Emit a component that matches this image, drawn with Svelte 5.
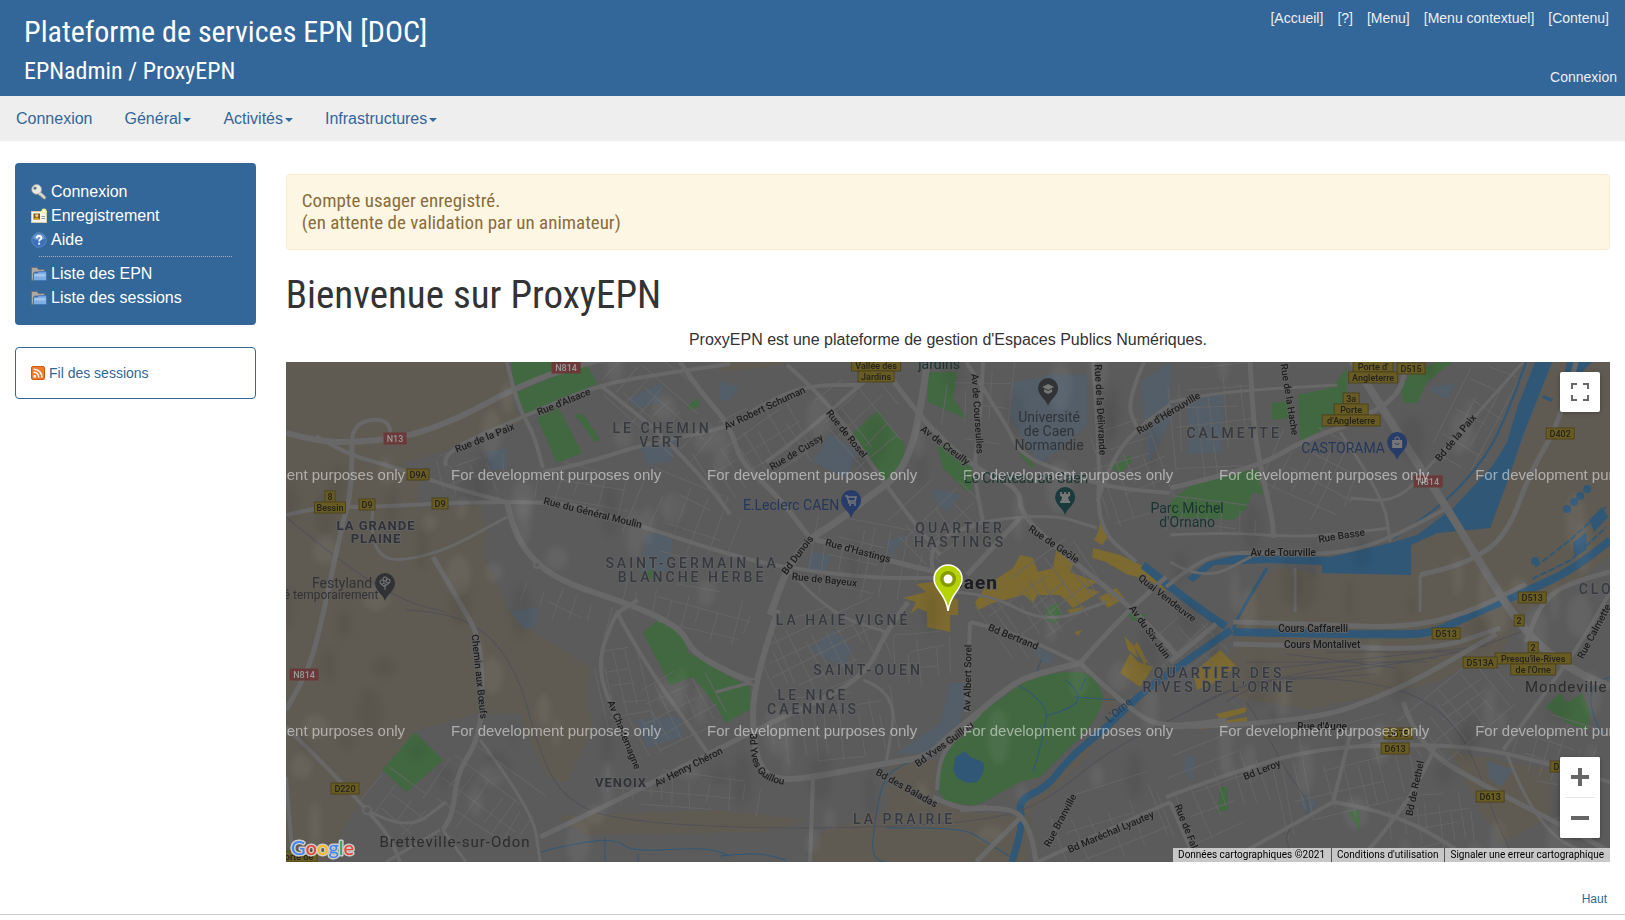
<script lang="ts">
	interface Road { w: number; d: string }
	interface Label { t: string; x: number; y: number; r?: number; k?: string }
	interface Badge { t: string; x: number; y: number; red?: boolean }
	interface District { x: number; y: number; w: number; h: number; a: number; s: number }

	const shortcuts = ['[Accueil]', '[?]', '[Menu]', '[Menu contextuel]', '[Contenu]'];

	const nav = [
		{ label: 'Connexion', caret: false },
		{ label: 'Général', caret: true },
		{ label: 'Activités', caret: true },
		{ label: 'Infrastructures', caret: true },
	];

	const sideTop = [
		{ label: 'Connexion', icon: 'key' },
		{ label: 'Enregistrement', icon: 'card' },
		{ label: 'Aide', icon: 'help' },
	];
	const sideBottom = ['Liste des EPN', 'Liste des sessions'];

	const farmland = [
		'M0 0H224L227 43L237 60L154 90L117 100L132 120V146L194 143L201 166L197 193L211 220L221 248L241 265L304 305L301 341L307 365L281 421L261 415L241 371L234 351H194L131 368L94 411L61 461L44 500H0Z',
		'M270 454L434 448L520 458L480 470L300 472Z',
		'M524 500L534 471L601 448L607 401L651 398L647 435L674 448L727 455L760 430L820 360L818 320L832 335L800 395L765 430L745 450L740 500Z',
		'M1267 0H1324V193L1284 226L1234 253L1215 290L1150 320L1021 348L951 335L920 330L951 281L950 250L990 205L1036 212H1125V183L1151 171L1204 166Z',
		'M1164 388L1194 395L1264 408V455L1217 481L1194 448Z',
		'M434 0H505L480 5L434 10Z',
	];

	const patches = [
		'M544 71L571 90L561 116L527 100Z', 'M724 56L727 20L767 13L801 13V63L754 103Z',
		'M647 126L674 133L661 150L651 142Z', 'M901 33H937L936 90L901 93Z',
		'M354 86L391 76L384 100L362 103Z', 'M201 90L221 86V106L204 108Z',
		'M361 173H387L384 210H354Z', 'M351 358L394 355L397 375L361 385Z',
		'M547 268L567 288L557 305L524 288Z', 'M664 321L681 321L674 361L651 391H611L654 361Z',
		'M1201 398L1227 408L1214 425L1203 416Z', 'M340 38L378 20L372 40L352 46Z',
		'M524 190L545 193L538 212L522 205Z', 'M434 20L452 24L445 38H434Z', 'M225 250L252 245L250 262L238 268Z',
		'M900 392L908 396L907 420L898 408Z', 'M1141 25L1170 22L1160 38Z', 'M855 20L884 0V60L862 100Z',
		'M1016 430L1030 440L1024 452L1014 445Z', 'M600 180L622 172L604 195Z', 'M752 284L768 296L762 302L750 294Z',
	];

	const greens = [
		'M226 0H276L267 10L227 26Z', 'M229 31L264 16L294 0H300L311 21L241 55Z', 'M251 56L272 45L296 91L271 101Z',
		'M289 53L297 51L314 78L309 80Z', 'M592 48L619 83L616 110L597 123L567 71Z',
		'M642 10H671L667 36L681 56L664 50L642 40Z', 'M651 86L661 83L686 106V126L681 130L657 106Z',
		'M824 106L844 93L846 100L834 111Z', 'M986 41L1004 38V56L986 58Z', 'M1012 33L1047 25L1061 5V53L1014 80Z',
		'M1114 26L1124 13L1151 0H1166L1141 20L1131 41L1117 41Z',
		'M884 140L901 126L927 113L971 108L977 133L966 130L961 146L947 158L884 155Z',
		'M129 370L157 398L121 430L96 408Z',
		'M357 271L374 256L394 265L402 291L417 298L444 315L464 325V348L439 361L431 345L407 315L384 323Z',
		'M1259 345L1274 331L1281 341L1296 331L1304 351L1301 368L1281 361Z', 'M1062 450L1074 448V471Z',
		'M934 425H941L942 448L931 451Z', 'M733 92L738 90L749 104L746 106Z', 'M760 247L772 240L776 252L768 262L758 256Z',
		'M354 213L366 207L376 214L364 217Z', 'M401 44L412 36L414 44L404 48Z', 'M840 250L860 252L856 262L846 258Z',
	];

	const shops = [
		'M689 240L701 223L727 206L734 193L747 196L752 210L767 206L771 183L778 192L791 193L784 210L811 220L800 226L814 230L787 246L774 233H751L747 241L738 233L707 241L692 248Z',
		'M647 206L664 214V233L672 238L672 253H664V270L641 265V250L632 246L624 252L630 240L617 236L640 230L630 222L647 220Z',
		'M814 160L818 168L824 172L816 183L808 178L812 170Z', 'M807 186L834 193L861 206L881 230L862 218L840 212L820 200L806 196Z',
		'M844 291L852 300L867 305L854 325L834 311Z', 'M934 288L951 305L930 320L911 328L907 311Z',
		'M914 363L961 355V360L915 367Z', 'M930 352L960 345V350L934 358Z', 'M838 274L848 284L852 296L842 288Z',
		'M788 270L796 268L792 274Z', 'M781 248L800 244L786 254Z', 'M812 236L830 226L838 236L822 246Z', 'M851 280L862 300L858 302L848 284Z',
	];

	const roads: Road[] = [
		{ w: 6, d: 'M0 71L34 80H74L121 75L174 56L221 30L267 11L320 -4' },
		{ w: 5, d: 'M66 81V126L57 160L47 206L37 253L24 305L0 348' },
		{ w: 4, d: 'M66 81Q66 60 86 58T104 74' },
		{ w: 4, d: 'M30 74L60 92L101 103L167 126L221 140' },
		{ w: 4, d: 'M221 140H287L327 156L361 166L444 193L501 206L584 216H647' },
		{ w: 4, d: 'M0 153L31 145H87L161 141L221 140' },
		{ w: 4, d: 'M0 365L37 401L81 448L104 475L114 500M0 415L7 500' },
		{ w: 4, d: 'M160 104L154 91L234 56L311 23L381 11L444 2' },
		{ w: 4, d: 'M221 0L231 43L247 70L257 106' },
		{ w: 4, d: 'M314 23L361 60L384 82L420 120L444 152' },
		{ w: 5, d: 'M394 0L414 30L444 63L454 100L490 132L524 176' },
		{ w: 4, d: 'M257 110L294 103L361 81L444 66L474 43L521 23L574 23' },
		{ w: 6, d: 'M221 140L227 170L251 203L284 223L341 241L394 265L407 291L444 311L467 320' },
		{ w: 6, d: 'M492 248L467 320V381L477 411L497 418L527 415L601 401L641 395L661 375L687 355L727 321L754 311L794 301' },
		{ w: 5, d: 'M254 475L307 450L377 415L444 381L491 358L577 318L600 270L622 240' },
		{ w: 5, d: 'M147 195L181 253L191 271L197 315L194 375L171 411L167 451L157 468' },
		{ w: 3, d: 'M87 146L81 200L147 195L221 155M194 378L247 448L254 500' },
		{ w: 4, d: 'M331 251L316 281L314 315L327 348L351 408M331 251L361 305L411 375L424 395M331 251L352 238' },
		{ w: 7, d: 'M641 0L634 56L617 110L581 136L551 160L524 176L501 206L484 253' },
		{ w: 4, d: 'M501 3L544 40L601 126L654 193M601 0L574 23L520 70L480 100' },
		{ w: 5, d: 'M601 10L631 53L687 106L734 126V153L787 200L834 236L870 270L892 296' },
		{ w: 4, d: 'M697 0L694 60L687 110L697 160M680 0L721 63L734 93L784 113L827 126L884 131' },
		{ w: 4, d: 'M807 0L814 93L811 166L850 200M884 43L851 66L827 96L811 140M858 0L840 40L851 66' },
		{ w: 5, d: 'M734 156L681 213M524 176L607 200L660 212' },
		{ w: 5, d: 'M884 126L971 106L1014 80L1071 60L1114 33L1120 0' },
		{ w: 8, d: 'M1064 -5L1117 80L1161 146L1197 206L1227 253L1254 285L1291 311L1324 325' },
		{ w: 5, d: 'M964 0L967 60L974 103L987 160V176' },
		{ w: 3, d: 'M884 40L927 30L1051 23M1054 70L1097 133L1104 180M1237 0L1184 60L1144 103L1111 140L1064 136' },
		{ w: 4, d: 'M880 225L917 193L967 190L1044 193L1097 180L1161 146' },
		{ w: 3, d: 'M884 173L940 170L1017 176L1104 166' },
		{ w: 5, d: 'M1290 0L1274 60L1244 110L1221 173L1184 200L1134 213M1324 210L1284 220L1255 240L1240 280' },
		{ w: 5, d: 'M947 260L1027 262L1117 266L1180 252L1240 222M947 282L1036 284L1150 288L1214 266' },
		{ w: 5, d: 'M884 300L930 262M794 301L830 260L880 215M794 301L850 355L884 365L940 358' },
		{ w: 5, d: 'M674 448L727 442L745 470L750 500M690 500L735 455M647 435L674 448L700 445' },
		{ w: 5, d: 'M884 365L1014 362L1110 330L1210 272M1117 340L1132 385L1200 425L1270 460L1324 490' },
		{ w: 4, d: 'M880 435L960 405L1040 385L1150 382L1220 390L1324 420M1217 388L1290 290L1324 230' },
		{ w: 4, d: 'M1150 382L1132 425L1090 480L1070 500M1047 440L1110 450L1190 500M1047 440L1066 365M1047 440L940 500' },
		{ w: 4, d: 'M884 440L910 500M751 500L884 440M647 208L640 180L697 160M527 415L524 500' },
		{ w: 4, d: 'M651 428L652 400L667 378L694 351M684 260L680 350M684 260L727 270L790 300' },
		{ w: 3, d: 'M154 468L100 500M157 468L180 500M81 448L120 470L160 440M467 320L430 330M577 318L612 330L600 401' },
		{ w: 3, d: 'M660 230H700L760 262L820 240M697 160L760 150L811 166M501 206L540 250L600 270' },
		{ w: 3, d: 'M1134 213V250M1009 206V250M884 200L917 220L970 192M1220 390L1250 470L1324 500' },
	];

	const rivers: Road[] = [
		{ w: 8, d: 'M1324 178L1291 206L1234 232L1184 253L1150 270L1117 273L947 270' },
		{ w: 7, d: 'M945 268L884 310L851 335L821 365L784 395L761 425L732 438L737 461L726 500' },
		{ w: 8, d: 'M857 203L884 225L927 257L940 264' },
		{ w: 3, d: 'M981 206L954 250L947 268' },
		{ w: 1, d: 'M730 322L762 340L758 372L747 410M780 318L794 330L790 344L760 354M794 328L800 316M788 335L830 338' },
		{ w: 1, d: 'M600 500H584L590 450L598 415L620 400L650 393M600 466L674 464L700 480L726 496M255 490L275 484L330 476L345 490L420 485L444 494' },
		{ w: 1, d: 'M319 476V500M352 492V500M434 494L470 490L500 498M755 298L750 312M1324 315L1304 322L1305 350L1316 372' },
		{ w: 2, d: 'M1240 0L1222 50L1200 95L1160 140L1108 176' },
	];

	const rails = [
		'M0 155L60 205L120 240L160 250M120 248L160 250L205 272L235 320L250 380L275 435L330 460L520 468L700 460L760 440L820 390L900 350L960 320L1060 310L1180 290L1240 268',
		'M900 350L960 312L1100 320L1160 350L1190 400L1210 460L1230 500',
		'M940 340L980 312L1150 296M960 300L1140 300M1000 292L1110 306M990 306L1200 284M1000 318L1090 312M1040 290L1180 290',
		'M960 340L980 370L1000 410L1030 450L998 468L1004 490',
	];

	// rounds the corners of a polyline: each inner point becomes a control point
	function smooth(d: string): string {
		if (/[QTC]/.test(d)) return d;
		let out = '';
		for (const part of d.split('M').slice(1)) {
			const pts: number[][] = [];
			for (const cmd of ('L' + part).match(/[LHV][^LHV]+/g) ?? []) {
				const n = cmd.slice(1).trim().split(/\s+/).map(Number);
				const prev = pts[pts.length - 1];
				if (cmd[0] === 'H') pts.push([n[0], prev[1]]);
				else if (cmd[0] === 'V') pts.push([prev[0], n[0]]);
				else pts.push(n);
			}
			out += `M${pts[0]}`;
			for (let i = 1; i < pts.length - 1; i++) {
				const [ax, ay] = pts[i];
				const [bx, by] = pts[i + 1];
				out += `Q${ax},${ay} ${(ax + bx) / 2},${(ay + by) / 2}`;
			}
			out += `L${pts[pts.length - 1]}`;
		}
		return out;
	}

	// side streets are laid out as jittered grids, one per district
	const districts: District[] = [
		{ x: 370, y: 40, w: 130, h: 70, a: 42, s: 13 }, { x: 470, y: 90, w: 110, h: 90, a: -32, s: 13 },
		{ x: 400, y: 165, w: 110, h: 90, a: 20, s: 16 }, { x: 575, y: 60, w: 90, h: 80, a: 50, s: 17 },
		{ x: 190, y: 110, w: 70, h: 50, a: -15, s: 14 }, { x: 300, y: 130, w: 100, h: 50, a: 12, s: 18 },
		{ x: 280, y: 245, w: 90, h: 50, a: 20, s: 14 }, { x: 400, y: 250, w: 130, h: 50, a: 14, s: 15 },
		{ x: 540, y: 285, w: 130, h: 80, a: -25, s: 11 }, { x: 550, y: 365, w: 130, h: 70, a: -8, s: 13 },
		{ x: 390, y: 350, w: 90, h: 70, a: -28, s: 11 }, { x: 340, y: 330, w: 50, h: 90, a: -14, s: 12 },
		{ x: 200, y: 440, w: 110, h: 80, a: 36, s: 14 }, { x: 110, y: 450, w: 70, h: 60, a: 40, s: 15 },
		{ x: 400, y: 430, w: 160, h: 40, a: 5, s: 14 }, { x: 580, y: 200, w: 110, h: 80, a: 10, s: 14 },
		{ x: 660, y: 160, w: 90, h: 80, a: -42, s: 15 }, { x: 760, y: 240, w: 120, h: 80, a: -36, s: 11 },
		{ x: 700, y: 40, w: 80, h: 90, a: 4, s: 19 }, { x: 850, y: 110, w: 80, h: 100, a: -20, s: 13 },
		{ x: 930, y: 60, w: 90, h: 110, a: -5, s: 14 }, { x: 1030, y: 115, w: 100, h: 90, a: 26, s: 14 },
		{ x: 1190, y: 60, w: 60, h: 110, a: 28, s: 14 }, { x: 930, y: 160, w: 100, h: 40, a: 8, s: 13 },
		{ x: 1060, y: 415, w: 140, h: 100, a: -12, s: 13 }, { x: 1150, y: 460, w: 90, h: 60, a: -8, s: 11 },
		{ x: 930, y: 430, w: 110, h: 100, a: -22, s: 15 }, { x: 830, y: 460, w: 120, h: 80, a: -20, s: 17 },
		{ x: 1180, y: 350, w: 120, h: 70, a: -38, s: 12 }, { x: 1270, y: 390, w: 80, h: 70, a: 15, s: 13 },
		{ x: 900, y: 290, w: 70, h: 60, a: -40, s: 13 }, { x: 640, y: 300, w: 60, h: 60, a: -6, s: 15 },
	];

	let seed = 7;
	function rnd() {
		seed = (seed * 16807) % 2147483647;
		return seed / 2147483647;
	}

	function streets(d: District): string {
		let out = '';
		for (let x = -d.w / 2; x <= d.w / 2; x += d.s * (0.7 + rnd() * 0.8)) {
			const top = -d.h / 2 + rnd() * d.h * 0.4;
			const end = d.h / 2 - rnd() * d.h * 0.4;
			out += `M${x.toFixed()} ${top.toFixed()}L${(x + rnd() * 6 - 3).toFixed()} ${end.toFixed()}`;
		}
		for (let y = -d.h / 2; y <= d.h / 2; y += d.s * (1 + rnd())) {
			const left = -d.w / 2 + rnd() * d.w * 0.4;
			const end = d.w / 2 - rnd() * d.w * 0.4;
			out += `M${left.toFixed()} ${y.toFixed()}L${end.toFixed()} ${(y + rnd() * 8 - 4).toFixed()}`;
		}
		return out;
	}

	const grids = districts.map((d) => ({ ...d, path: streets(d) }));

	const hills = Array.from({ length: 150 }, () => ({
		x: rnd() * 1324, y: rnd() * 500, rx: 4 + rnd() * 9, ry: 8 + rnd() * 20, light: rnd() > 0.4,
	}));

	const labels: Label[] = [
		{ t: 'LE CHEMIN', x: 376, y: 71, k: 'area' }, { t: 'VERT', x: 376, y: 85, k: 'area' },
		{ t: 'LA GRANDE', x: 90, y: 168, k: 'town' }, { t: 'PLAINE', x: 90, y: 181, k: 'town' },
		{ t: 'QUARTIER', x: 674, y: 171, k: 'area' }, { t: 'HASTINGS', x: 674, y: 185, k: 'area' },
		{ t: 'SAINT-GERMAIN LA', x: 406, y: 206, k: 'area' }, { t: 'BLANCHE HERBE', x: 406, y: 220, k: 'area' },
		{ t: 'CALMETTE', x: 948, y: 76, k: 'area' }, { t: 'CLO', x: 1310, y: 232, k: 'area' },
		{ t: 'LA HAIE VIGNÉ', x: 557, y: 263, k: 'area' }, { t: 'SAINT-OUEN', x: 582, y: 313, k: 'area' },
		{ t: 'LE NICE', x: 527, y: 338, k: 'area' }, { t: 'CAENNAIS', x: 527, y: 352, k: 'area' },
		{ t: 'LA PRAIRIE', x: 618, y: 462, k: 'area' }, { t: 'VENOIX', x: 335, y: 425, k: 'town' },
		{ t: 'QUARTIER DES', x: 933, y: 316, k: 'area' }, { t: "RIVES DE L'ORNE", x: 933, y: 330, k: 'area' },
		{ t: 'Bretteville-sur-Odon', x: 169, y: 485, k: 'village' }, { t: 'Mondeville', x: 1280, y: 330, k: 'village' },
		{ t: 'Caen', x: 688, y: 227, k: 'city' },
		{ t: 'Festyland', x: 56, y: 226, k: 'poi' }, { t: 'é temporairement', x: 45, y: 237, k: 'small' },
		{ t: 'Université', x: 763, y: 60, k: 'poi' }, { t: 'de Caen', x: 763, y: 74, k: 'poi' }, { t: 'Normandie', x: 763, y: 88, k: 'poi' },
		{ t: 'E.Leclerc CAEN', x: 505, y: 148, k: 'poi shop' }, { t: 'CASTORAMA', x: 1057, y: 91, k: 'poi shop' },
		{ t: 'Le Château de Caen', x: 740, y: 121, k: 'poi park' }, { t: 'jardins', x: 653, y: 7, k: 'poi park' },
		{ t: 'Parc Michel', x: 901, y: 151, k: 'poi park' }, { t: "d'Ornano", x: 901, y: 165, k: 'poi park' },
		{ t: "L'Orne", x: 835, y: 351, r: -41, k: 'river' },
		{ t: "Rue d'Alsace", x: 279, y: 43, r: -22 }, { t: 'Rue de la Paix', x: 200, y: 79, r: -22 },
		{ t: 'Rue du Général Moulin', x: 306, y: 154, r: 14 }, { t: 'Av Robert Schuman', x: 480, y: 49, r: -25 },
		{ t: 'Rue de Cussy', x: 512, y: 93, r: -31 }, { t: 'Rue de Rosel', x: 558, y: 74, r: 51 },
		{ t: 'Av de Creully', x: 657, y: 86, r: 37 }, { t: 'Av de Courseulles', x: 688, y: 52, r: 86 },
		{ t: 'Rue de la Délivrande', x: 811, y: 48, r: 87 }, { t: "Rue d'Hérouville", x: 884, y: 54, r: -31 },
		{ t: 'Rue de Geôle', x: 766, y: 185, r: 34 }, { t: 'Bd Dunois', x: 514, y: 195, r: -53 },
		{ t: "Rue d'Hastings", x: 571, y: 192, r: 15 }, { t: 'Rue de Bayeux', x: 538, y: 221, r: 6 },
		{ t: 'Quai Vendeuvre', x: 879, y: 239, r: 38 }, { t: 'Rue de la Hache', x: 1000, y: 38, r: 81 },
		{ t: 'Bd de la Paix', x: 1172, y: 78, r: -50 }, { t: 'Rue Basse', x: 1056, y: 177, r: -9 },
		{ t: 'Av de Tourville', x: 997, y: 194 }, { t: 'Rue Calmette', x: 1311, y: 271, r: -62 },
		{ t: 'Chemin aux Bœufs', x: 190, y: 315, r: 84 }, { t: 'Av Charlemagne', x: 335, y: 374, r: 68 },
		{ t: 'Av Henry Chéron', x: 404, y: 408, r: -27 }, { t: 'Av Albert Sorel', x: 685, y: 316, r: -89 },
		{ t: 'Bd Bertrand', x: 726, y: 278, r: 22 }, { t: 'Bd Yves Guillou', x: 660, y: 385, r: -36 },
		{ t: 'Bd des Baladas', x: 619, y: 429, r: 29 }, { t: 'Rue Branville', x: 777, y: 460, r: -62 },
		{ t: 'Bd Maréchal Lyautey', x: 826, y: 473, r: -23 }, { t: 'Av du Six Juin', x: 861, y: 272, r: 54 },
		{ t: 'Cours Caffarelli', x: 1027, y: 270 }, { t: 'Cours Montalivet', x: 1036, y: 286 },
		{ t: "Rue d'Auge", x: 1036, y: 368 }, { t: 'Bd Leroy', x: 977, y: 411, r: -22 },
		{ t: 'Bd de Rethel', x: 1132, y: 427, r: -78 }, { t: 'Rue de Fala', x: 898, y: 468, r: 68 },
	];

	const badges: Badge[] = [
		{ t: 'N814', x: 280, y: 6, red: true }, { t: 'N13', x: 109, y: 77, red: true }, { t: 'N814', x: 18, y: 313, red: true },
		{ t: 'N814', x: 1142, y: 120, red: true }, { t: 'D9A', x: 132, y: 113 }, { t: '8', x: 44, y: 135 }, { t: 'Bessin', x: 44, y: 146 },
		{ t: 'D9', x: 81, y: 143 }, { t: 'D9', x: 154, y: 142 }, { t: 'Vallée des', x: 590, y: 4 }, { t: 'Jardins', x: 590, y: 15 },
		{ t: "Porte d'", x: 1087, y: 5 }, { t: 'Angleterre', x: 1087, y: 16 }, { t: 'D515', x: 1125, y: 7 }, { t: '3a', x: 1065, y: 37 },
		{ t: 'Porte', x: 1065, y: 48 }, { t: "d'Angleterre", x: 1065, y: 59 }, { t: 'D402', x: 1274, y: 72 }, { t: 'D513', x: 1246, y: 236 },
		{ t: 'D220', x: 59, y: 427 }, { t: 'orte de', x: 13, y: 495 }, { t: 'D513', x: 1160, y: 272 }, { t: '2', x: 1233, y: 259 },
		{ t: '2', x: 1247, y: 286 }, { t: "Presqu'île-Rives", x: 1247, y: 297 }, { t: "de l'Orne", x: 1247, y: 308 },
		{ t: 'D513A', x: 1194, y: 301 }, { t: 'D675', x: 1112, y: 372 }, { t: 'D613', x: 1109, y: 387 }, { t: 'D613', x: 1204, y: 435 },
		{ t: 'D613', x: 1278, y: 405 },
	];

	function badgeWidth(t: string): number {
		return t.length < 6 ? t.length * 6 + 4 : Math.round(t.length * 4.5 + 4);
	}

	const pins = [
		{ x: 99, y: 222, fill: '#303236', icon: 'tree' }, { x: 762, y: 27, fill: '#303236', icon: 'school' },
		{ x: 779, y: 136, fill: '#1a3a3c', icon: 'tower' }, { x: 565, y: 139, fill: '#273c69', icon: 'cart' },
		{ x: 1111, y: 81, fill: '#273c69', icon: 'bag' },
	];

	const watermarkX = [-91, 165, 421, 677, 933, 1189];
	const watermarkY = [118, 374];
</script>

<header class="banner" id="top">
	<div class="titles">
		<h2 class="site"><a href="#top">Plateforme de services EPN [DOC]</a></h2>
		<h3 class="app"><a href="#top">EPNadmin / ProxyEPN</a></h3>
	</div>
	<div class="tools">
		<div class="shortcuts">
			{#each shortcuts as s}<a href="#content">{s}</a>{/each}
		</div>
		<a class="login" href="#login">Connexion</a>
	</div>
</header>

<nav class="navbar">
	{#each nav as item}
		<a href="#menu">{item.label}{#if item.caret}<span class="caret"></span>{/if}</a>
	{/each}
</nav>

<div class="layout">
	<aside class="sidebar">
		<div class="panel">
			<ul>
				{#each sideTop as item}
					<li>
						<a href="#side">
							<svg class="icon" viewBox="0 0 16 16" aria-hidden="true">
								{#if item.icon === 'key'}
									<path d="M9 7.4L14.6 12.6V15H12.4L11.6 13.6L10.4 13.4L9.8 12L8.4 11.6L6.6 9.8Z" fill="#d8d8ce" stroke="#8f8f86" stroke-width=".7" />
									<circle cx="5.6" cy="5.4" r="4.9" fill="#e9e9e2" stroke="#a3a39a" stroke-width=".7" />
									<circle cx="4" cy="4.2" r="1.4" fill="#4c6f8f" stroke="#96968c" stroke-width=".5" />
								{:else if item.icon === 'card'}
									<rect x=".5" y="3.5" width="15" height="11" fill="#f7f5e8" stroke="#d2cda8" />
									<rect x="2.5" y="5.5" width="6.5" height="6" fill="#7a5a10" />
									<circle cx="5.7" cy="7.6" r="1.7" fill="#f1c27d" />
									<path d="M3 11.5Q3 9.4 5.7 9.4T8.5 11.5Z" fill="#e9a11b" />
									<path d="M10.5 8.5H14M10.5 10.5H14" stroke="#9a9a9a" />
									<circle cx="13" cy="3.2" r="2.6" fill="#f8ef8a" />
									<circle cx="13" cy="3.2" r="1.3" fill="#fffce0" />
								{:else}
									<circle cx="8" cy="8" r="7.3" fill="#3c70b8" stroke="#5c86bf" />
									<path d="M2 6.5A6.2 6.2 0 0 1 14 6.5Q8 9.5 2 6.5Z" fill="#6f9bd6" />
									<path d="M5.7 6.2Q5.8 4 8.1 4T10.4 6.1C10.4 7.7 8.1 7.6 8.1 9.5" fill="none" stroke="#fff" stroke-width="1.8" />
									<rect x="7.2" y="10.7" width="1.9" height="1.9" fill="#fff" />
								{/if}
							</svg>
							{item.label}
						</a>
					</li>
				{/each}
			</ul>
			<hr />
			<ul>
				{#each sideBottom as label}
					<li>
						<a href="#side">
							<svg class="icon" viewBox="0 0 16 16" aria-hidden="true">
								<path d="M.5 14.5V1.5H6L7.5 3.5H13.5V6H3.5L2 14.5Z" fill="#aaa9a5" stroke="#6d6d6a" stroke-width=".8" />
								<path d="M2.5 14.5V7H6.5L7.5 5.7H15.5V14.5Z" fill="#7fade2" stroke="#3f76b8" stroke-width=".9" />
								<path d="M3.5 8H14.5V10.5H3.5Z" fill="#a3c6ee" />
							</svg>
							{label}
						</a>
					</li>
				{/each}
			</ul>
		</div>

		<div class="feed">
			<a href="#feed">
				<svg class="rss" viewBox="0 0 14 14" aria-hidden="true">
					<rect x=".5" y=".5" width="13" height="13" rx="1.5" fill="#ee7a2b" stroke="#cf5a14" />
					<circle cx="3.8" cy="10.4" r="1.3" fill="#fff" />
					<path d="M2.6 6.3A5 5 0 0 1 7.8 11.6M2.6 3.2A8.2 8.2 0 0 1 11 11.6" fill="none" stroke="#fff" stroke-width="1.5" />
				</svg>
				Fil des sessions
			</a>
		</div>
	</aside>

	<main class="content" id="content">
		<div class="alert" role="status">
			Compte usager enregistré.<br />
			(en attente de validation par un animateur)
		</div>

		<h1>Bienvenue sur ProxyEPN</h1>
		<p class="intro">ProxyEPN est une plateforme de gestion d'Espaces Publics Numériques.</p>

		<div class="map">
			<svg class="tiles" viewBox="0 0 1324 500" preserveAspectRatio="xMidYMid slice" role="img" aria-label="Caen">
				<defs>
					<filter id="haze" x="-50%" y="-50%" width="200%" height="200%"><feGaussianBlur stdDeviation="3" /></filter>
				</defs>
				<rect width="1324" height="500" fill="#5b5b5b" />
				{#each farmland as d}<path {d} fill="#605b52" />{/each}
				{#each patches as d}<path {d} fill="#535e69" />{/each}
				{#each greens as d}<path {d} fill="#426841" />{/each}
				<path d="M651 428V408L667 378L694 351L737 321Q767 308 794 310Q812 314 817 335Q814 355 794 375L754 415L734 420L707 435Q694 444 681 443L661 440Z" fill="#426841" />
				{#each shops as d}<path {d} fill="#7c6a30" />{/each}

				<g class="streets">
					{#each grids as g}
						<path d={g.path} transform="translate({g.x} {g.y}) rotate({g.a})" />
					{/each}
				</g>

				<g class="water">
					<path class="fill" d="M1249 0L1231 46L1221 80L1207 103L1167 146L1131 173L1104 181L1044 195L951 193L921 200L901 216L907 220L928 203L984 201L1036 203V211L1125 213V183L1151 171L1204 166L1221 120L1237 73L1266 0ZM1281 0H1306L1294 12H1278Z" />
					<path class="fill" d="M667 408L669 395L679 389L684 395L697 400Q700 410 691 420L681 421L671 416Z" />
					{#each rivers as r}<path d={smooth(r.d)} stroke-width={r.w} />{/each}
					<path class="fill" d="M1257 33L1267 37L1265 40L1256 36ZM1287 181L1300 170V188L1288 195ZM1303 158L1316 145L1322 155L1308 170Z" />
					<path d="M1246 217L1285 198L1320 165M1249 205L1284 178L1320 145" stroke-width="2" stroke-dasharray="7 2" />
					{#each [[1281, 147], [1288, 140], [1294, 134], [1301, 127], [1249, 199]] as [cx, cy]}
						<circle class="fill" {cx} {cy} r="4" />
					{/each}
				</g>

				<g class="rails">{#each rails as d}<path d={smooth(d)} />{/each}</g>
				<g class="roads">
					{#each roads as r}<path d={smooth(r.d)} stroke-width={r.w} />{/each}
					<circle cx="467" cy="320" r="3" /><circle cx="251" cy="203" r="3" /><circle cx="81" cy="448" r="4" />
				</g>

				<g filter="url(#haze)">
					{#each hills as h}
						<ellipse cx={h.x} cy={h.y} rx={h.rx} ry={h.ry} fill={h.light ? '#fff' : '#000'} opacity=".05" />
					{/each}
				</g>

				{#each badges as b}
					<rect class:red={b.red} class="badge" x={b.x - badgeWidth(b.t) / 2} y={b.y - 6} width={badgeWidth(b.t)} height="11" />
					<text class:red={b.red} class="badge-text" x={b.x} y={b.y + 3}>{b.t}</text>
				{/each}

				{#each labels as l}
					<text class="label {l.k ?? 'road'}" transform="translate({l.x} {l.y}) rotate({l.r ?? 0})">{l.t}</text>
				{/each}
				<path id="guillou" d="M464 371Q463 400 473 411T503 423" fill="none" />
				<text class="label curved"><textPath href="#guillou">Bd Yves Guillou</textPath></text>

				{#each pins as p}
					<g transform="translate({p.x} {p.y})">
						<path d="M0 17C-2 10 -10 7 -10 -1A10 10 0 0 1 10 -1C10 7 2 10 0 17Z" fill={p.fill} />
						{#if p.icon === 'school'}
							<path d="M-6 -2L0 -5L6 -2L0 1ZM-4 0V3L0 5L4 3V0L0 2Z" fill="#777" />
						{:else if p.icon === 'tower'}
							<path d="M-5 -6H-3V-4H-1V-6H1V-4H3V-6H5V-2L3 -1L4 3H5V5H-5V3H-4L-3 -1L-5 -2Z" fill="#777" />
						{:else if p.icon === 'cart'}
							<path d="M-6 -5H-4L-2 2H5M-4 -4H5L4 0H-3" fill="none" stroke="#777" stroke-width="1.5" />
							<circle cx="-1" cy="4" r="1" fill="#777" /><circle cx="4" cy="4" r="1" fill="#777" />
						{:else if p.icon === 'bag'}
							<path d="M-5 -3H5V5H-5Z" fill="#777" />
							<path d="M-2 -3V-5Q0 -7 2 -5V-3" fill="none" stroke="#777" />
							<path d="M-2 0Q0 3 2 0" fill="none" stroke="#273c69" />
						{:else}
							<path d="M0 6V-1M0 3L-4 0M0 2L4 -1" stroke="#777" />
							<circle cx="-3" cy="-2" r="2" fill="none" stroke="#777" /><circle cx="3" cy="-3" r="2" fill="none" stroke="#777" />
							<circle cx="0" cy="-5" r="2" fill="none" stroke="#777" />
						{/if}
					</g>
				{/each}

				{#each watermarkY as y}
					{#each watermarkX as x}<text class="watermark" {x} {y}>For development purposes only</text>{/each}
				{/each}

				<g transform="translate(662 217)">
					<path d="M0 32C-2 14 -14 11 -14 0A14 14 0 0 1 14 0C14 11 2 14 0 32Z" fill="#b5d300" stroke="#fff" stroke-width="1.5" />
					<circle r="8" fill="#869b00" />
					<circle r="4.5" fill="#fff" />
				</g>

				<text class="google" x="5" y="493"><tspan fill="#4285f4">G</tspan><tspan fill="#ea4335">o</tspan><tspan fill="#fbbc05">o</tspan><tspan fill="#4285f4">g</tspan><tspan fill="#34a853">l</tspan><tspan fill="#ea4335">e</tspan></text>
			</svg>

			<button class="ctl fullscreen" aria-label="Passer en plein écran">
				<svg viewBox="0 0 18 18" aria-hidden="true"><path d="M1 6V1H6M12 1H17V6M17 12V17H12M6 17H1V12" /></svg>
			</button>
			<div class="zoom">
				<button class="ctl" aria-label="Zoom avant"><svg viewBox="0 0 18 18" aria-hidden="true"><path class="bold" d="M9 0V18M0 9H18" /></svg></button>
				<span class="sep"></span>
				<button class="ctl" aria-label="Zoom arrière"><svg viewBox="0 0 18 18" aria-hidden="true"><path class="bold" d="M0 9H18" /></svg></button>
			</div>
			<div class="credits">
				<span>Données cartographiques ©2021</span>
				<a href="#terms">Conditions d'utilisation</a>
				<a href="#report">Signaler une erreur cartographique</a>
			</div>
		</div>
	</main>
</div>

<footer><a href="#top">Haut</a></footer>

<style>
	:global(body) {
		background: #fff;
		color: #333;
		font-family: 'Liberation Sans', Arial, sans-serif;
		font-size: 16px;
		line-height: 24px;
	}

	a { color: #369; text-decoration: none; }
	a:hover { text-decoration: underline; }

	h1, h2, h3, .alert {
		font-family: 'Nimbus Sans Narrow', 'Roboto Condensed', 'Open Sans Condensed', 'Noto Sans ExtraCondensed', 'Noto Sans Condensed', Roboto, sans-serif;
		font-weight: 400;
	}

	.banner {
		display: flex;
		justify-content: space-between;
		height: 96px;
		background: #369;
	}
	.banner a { color: #eee; }

	.titles { padding: 12px 24px 0; }
	.titles h2, .titles h3 { margin: 0; }
	.titles .site a, .titles .app a { color: #fff; }
	.site { font-size: 30px; line-height: 40px; }
	.app { font-size: 24px; line-height: 38px; }

	.tools {
		display: flex;
		flex-direction: column;
		justify-content: space-between;
		align-items: flex-end;
		padding: 8px 8px 9px;
		font-size: 14px;
		line-height: 20px;
	}
	.shortcuts { display: flex; gap: 14px; padding-right: 8px; }

	.navbar {
		display: flex;
		gap: 32px;
		padding: 11px 16px 10px;
		background: #eee;
	}
	.navbar a { display: flex; align-items: center; gap: 2px; }

	.caret {
		border-top: 4px solid;
		border-left: 4px solid transparent;
		border-right: 4px solid transparent;
		margin-top: 2px;
	}

	.layout { display: grid; grid-template-columns: 1fr 5fr; }

	.sidebar { padding: 22px 15px 0; }

	.panel {
		padding: 17px 16px 15px;
		border-radius: 4px;
		background: #369;
	}
	.panel ul { margin: 0; padding: 0; list-style: none; }
	.panel a { display: flex; align-items: center; gap: 4px; color: #fff; }
	.panel hr {
		margin: 4px 8px 5px;
		border: 0;
		border-top: 1px dotted #aab;
	}
	.icon { width: 16px; height: 16px; }

	.feed {
		margin-top: 22px;
		padding: 15px;
		border: 1px solid #369;
		border-radius: 4px;
		font-size: 14px;
		line-height: 20px;
	}
	.feed a { display: flex; align-items: center; gap: 4px; }
	.rss { width: 14px; height: 14px; }

	.content { min-width: 0; padding: 33px 15px 0; }

	.alert {
		padding: 15px;
		border: 1px solid #faebcc;
		border-radius: 4px;
		background: #fdf6e3;
		color: #8a6d3b;
		font-size: 19px;
		line-height: 22px;
	}

	h1 { margin: 23px 0 11px; font-size: 39px; line-height: 44px; }

	.intro { margin: 0 0 10px; text-align: center; }

	.map { position: relative; height: 500px; overflow: hidden; }
	.tiles { display: block; width: 100%; height: 100%; }

	.streets path { fill: none; stroke: #666; stroke-width: 1; }
	.roads path { fill: none; stroke: #686868; stroke-linejoin: round; }
	.roads circle { fill: #5b5b5b; stroke: #686868; stroke-width: 2; }
	.rails path { fill: none; stroke: #505157; stroke-width: 1; stroke-linejoin: round; }
	.water path { fill: none; stroke: #305776; stroke-linejoin: round; }
	.water .fill { fill: #305776; stroke: none; }

	.badge { fill: #685c24; stroke: #4e441b; }
	.badge.red { fill: #6b393a; stroke: #6b393a; }
	.badge-text { fill: #25231a; font: 500 9px Roboto, sans-serif; text-anchor: middle; }
	.badge-text.red { fill: #999; }

	.label {
		fill: #1c1c1c;
		stroke: #626262;
		stroke-width: 2px;
		stroke-linejoin: round;
		paint-order: stroke;
		font: 500 10px Roboto, sans-serif;
		text-anchor: middle;
	}
	.label.curved { text-anchor: start; stroke: none; }
	.label.area { fill: #36393f; font-size: 14px; letter-spacing: 3px; }
	.label.town { fill: #303238; font-size: 13px; font-weight: 700; letter-spacing: 1px; }
	.label.village { fill: #2c2c2e; font-size: 15px; letter-spacing: 1px; stroke: none; font-weight: 400; }
	.label.city { font-size: 19px; font-weight: 700; letter-spacing: 1px; }
	.label.poi { fill: #303338; font-size: 14px; font-weight: 400; stroke: none; }
	.label.small { fill: #303338; font-size: 12px; font-weight: 400; stroke: none; }
	.label.shop { fill: #26375c; }
	.label.park { fill: #19332f; }
	.label.river { fill: #1f3a55; font-size: 11px; font-weight: 400; stroke: none; }

	.watermark {
		fill: #fff;
		fill-opacity: .5;
		font: 15px 'Liberation Sans', Arial, sans-serif;
	}
	.google {
		font: 500 20px Lato, sans-serif;
		stroke: #ccc;
		stroke-width: 3px;
		stroke-linejoin: round;
		paint-order: stroke;
	}

	.ctl {
		display: grid;
		place-items: center;
		width: 40px;
		height: 40px;
		padding: 0;
		border: 0;
		border-radius: 2px;
		background: #fff;
		cursor: pointer;
	}
	.ctl svg { width: 18px; height: 18px; }
	.ctl path { fill: none; stroke: #666; stroke-width: 2; }
	.ctl .bold { stroke-width: 4; }

	.fullscreen { position: absolute; top: 10px; right: 10px; box-shadow: 0 1px 4px rgba(0, 0, 0, .3); }
	.zoom {
		position: absolute;
		right: 10px;
		bottom: 24px;
		border-radius: 2px;
		background: #fff;
		box-shadow: 0 1px 4px rgba(0, 0, 0, .3);
	}
	.sep { display: block; height: 1px; margin: 0 5px; background: #e6e6e6; }

	.credits {
		position: absolute;
		right: 0;
		bottom: 0;
		display: flex;
		font: 10px/14px Roboto, sans-serif;
	}
	.credits > * {
		padding: 0 6px 0 5px;
		background: rgba(245, 245, 245, .7);
		color: #000;
	}
	.credits > * + * { border-left: 1px solid #555; }

	footer {
		padding: 27px 18px 5px;
		border-bottom: 1px solid #ccc;
		font-size: 12px;
		line-height: 20px;
		text-align: right;
	}
</style>
